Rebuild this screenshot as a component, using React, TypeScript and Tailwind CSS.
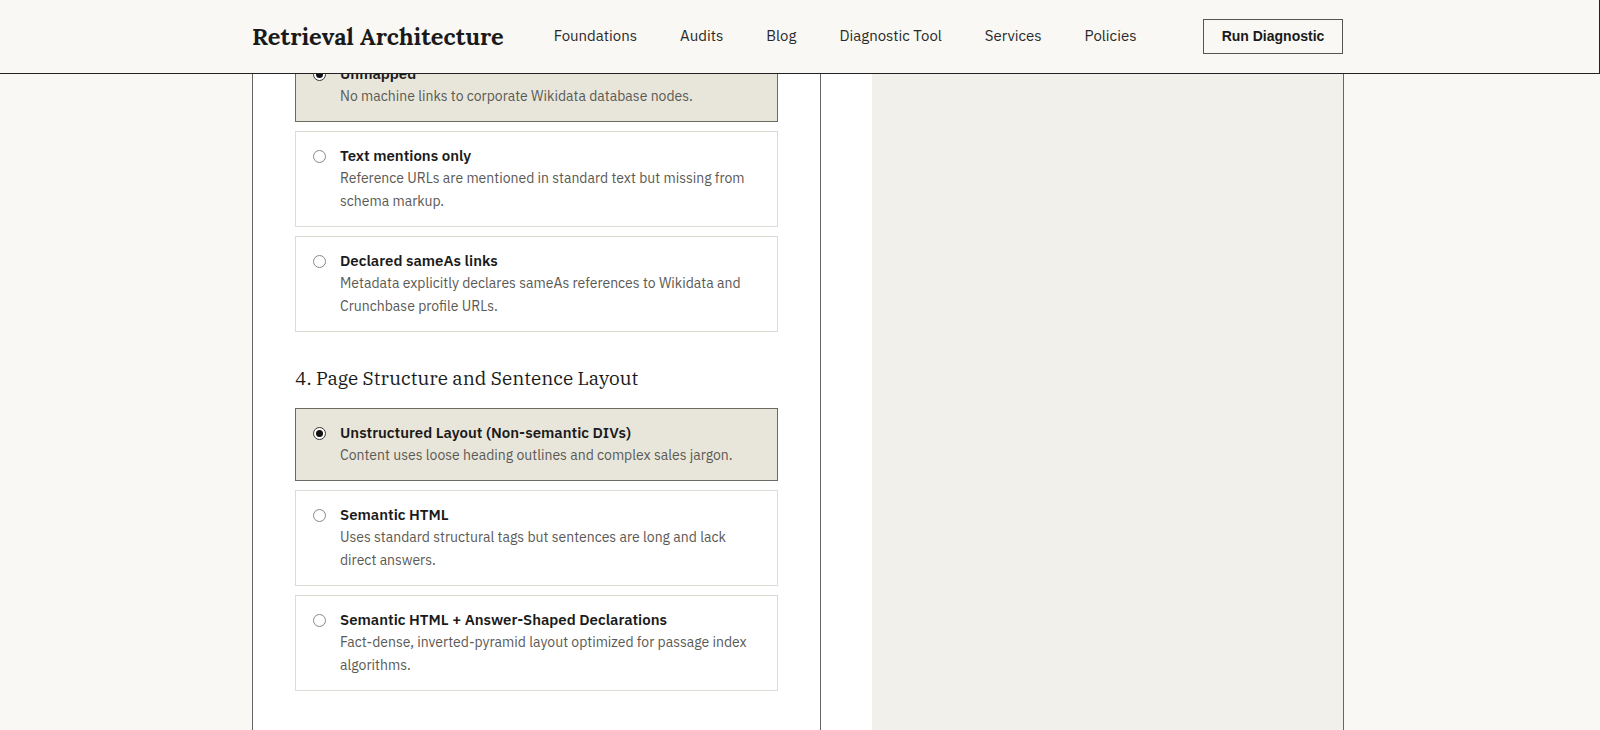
import React from "react";

const sans = { fontFamily: '"IBM Plex Sans","Noto Sans","Liberation Sans",sans-serif' };

function Card({ title, desc, sel }: { title: string; desc: string; sel?: boolean }) {
  return (
    <div className={`flex gap-[14px] border px-[17px] py-[13px] ${sel ? "border-[#6b6b63] bg-[#e8e6da]" : "border-[#dedbd3] bg-white"}`}>
      <div className="pt-[5px]">
        <div className={`flex h-[13px] w-[13px] items-center justify-center rounded-full border ${sel ? "border-[#333]" : "border-[#888]"} bg-white`}>
          {sel && <div className="h-[7px] w-[7px] rounded-full bg-[#111]" />}
        </div>
      </div>
      <div>
        <div className="text-[15px] font-semibold leading-[22px] text-[#1a1a1a]">{title}</div>
        <div className="text-[14px] leading-[23px] text-[#5a5a55]">{desc}</div>
      </div>
    </div>
  );
}

export default function App() {
  return (
    <div className="h-[730px] overflow-hidden bg-[#f9f8f4]" style={sans}>
      <header className="relative z-10 h-[74px] border-b border-r border-[#222] bg-[#f9f8f4]">
        <div className="mx-auto flex h-full w-[1091px] -translate-x-[2px] items-center">
          <div className="text-[23.5px] font-bold text-[#1a1a1a]" style={{ fontFamily: '"Lora","Liberation Serif",serif' }}>
            Retrieval Architecture
          </div>
          <nav className="ml-[50px] flex gap-[43px] text-[15px] text-[#2a2a2a]">
            <span>Foundations</span><span>Audits</span><span>Blog</span><span>Diagnostic Tool</span><span>Services</span><span>Policies</span>
          </nav>
          <div className="ml-auto mb-[1px] flex h-[35px] w-[140px] items-center justify-center border border-[#555] text-[14px] font-semibold text-[#1a1a1a]" style={{ fontFamily: '"Liberation Sans",Arial,sans-serif' }}>
            Run Diagnostic
          </div>
        </div>
      </header>
      <main className="mx-auto -mt-[25px] flex h-[720px] w-[1092px] -translate-x-[2px] border-x border-[#666] bg-white">
        <div className="w-[568px] border-r border-[#666] px-[42px]">
          <div className="space-y-[9px]">
            <Card sel title="Unmapped" desc="No machine links to corporate Wikidata database nodes." />
            <Card title="Text mentions only" desc="Reference URLs are mentioned in standard text but missing from schema markup." />
            <Card title="Declared sameAs links" desc="Metadata explicitly declares sameAs references to Wikidata and Crunchbase profile URLs." />
          </div>
          <h2 className="mt-[32px] mb-[15px] text-[19px] text-[#1a1a1a]" style={{ fontFamily: '"IBM Plex Serif","Liberation Serif",serif' }}>
            4. Page Structure and Sentence Layout
          </h2>
          <div className="space-y-[9px]">
            <Card sel title="Unstructured Layout (Non-semantic DIVs)" desc="Content uses loose heading outlines and complex sales jargon." />
            <Card title="Semantic HTML" desc="Uses standard structural tags but sentences are long and lack direct answers." />
            <Card title="Semantic HTML + Answer-Shaped Declarations" desc="Fact-dense, inverted-pyramid layout optimized for passage index algorithms." />
          </div>
        </div>
        <div className="ml-[51px] flex-1 bg-[#f2f0ea]" />
      </main>
    </div>
  );
}
